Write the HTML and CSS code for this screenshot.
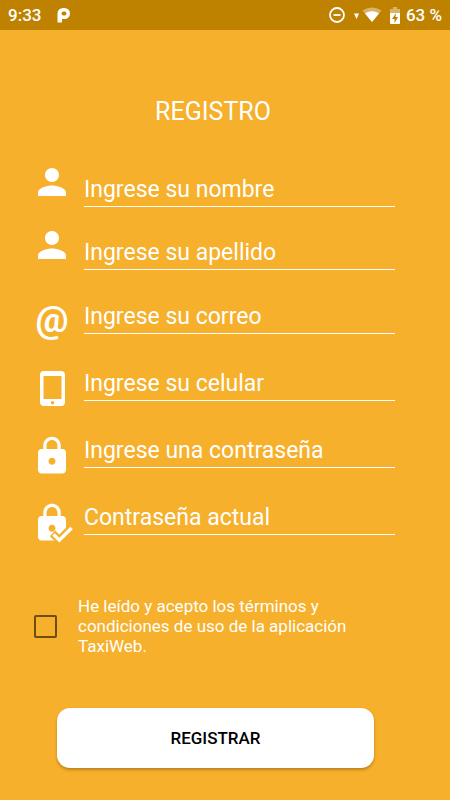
FILE: index.html
```html
<!DOCTYPE html>
<html lang="es">
<head>
<meta charset="utf-8">
<meta name="viewport" content="width=device-width, initial-scale=1">
<title>Registro</title>
<link rel="stylesheet" href="styles.css">
</head>
<body>
<header class="status">
  <span class="clock">9:33</span>
  <svg class="brand" width="14" height="16" viewBox="0 0 14 16" aria-hidden="true">
    <path fill="#fff" fill-rule="evenodd" d="M0.500 6.500A5.500 5.500 0 0 1 6 1H7.500a5.500 5.500 0 0 1 0 11H5v3.500H0.500zM6.500 4.500A2 2 0 0 0 6.500 8.500H7.500A2 2 0 0 0 7.500 4.500z"/>
  </svg>
  <svg class="dnd" width="16" height="16" viewBox="0 0 16 16" fill="none" stroke="#fff" stroke-width="1.800" aria-hidden="true">
    <circle cx="8" cy="8" r="7"/><path d="M4.500 8h7"/>
  </svg>
  <svg class="wifi" width="28" height="16" viewBox="0 0 28 16" aria-hidden="true">
    <path fill="#fff" d="M0 6.500h5L2.500 12z"/>
    <path fill="#fff" opacity=".4" d="M8.500 3.500Q18 -2.500 27.500 3.500L18 15z"/>
    <path fill="#fff" d="M11 6.500Q18 2 25 6.500L18 15z"/>
  </svg>
  <svg class="battery" width="10" height="17" viewBox="0 0 10 17" aria-hidden="true">
    <path fill="#fff" opacity=".4" d="M3 0h4v2h3v4H0V2h3z"/>
    <path fill="#fff" d="M0 6h10v10q0 1-1 1H1q-1 0-1-1z"/>
    <path fill="#be8200" d="M6 6L2 12h2.500v4L8 10H5.500z"/>
  </svg>
  <span>63 %</span>
</header>

<main class="page">
  <h1 class="title">REGISTRO</h1>
  <form class="form">
    <div class="names">
      <div class="field">
        <label for="nombre" aria-label="Nombre"><svg class="icon" viewBox="0 0 24 24"><path d="M12 12c2.210 0 4-1.790 4-4s-1.790-4-4-4-4 1.790-4 4 1.790 4 4 4zm0 2c-2.670 0-8 1.340-8 4v2h16v-2c0-2.660-5.330-4-8-4z"/></svg></label>
        <input id="nombre" class="entry" type="text" placeholder="Ingrese su nombre">
      </div>
      <div class="field">
        <label for="apellido" aria-label="Apellido"><svg class="icon" viewBox="0 0 24 24"><path d="M12 12c2.210 0 4-1.790 4-4s-1.790-4-4-4-4 1.790-4 4 1.790 4 4 4zm0 2c-2.670 0-8 1.340-8 4v2h16v-2c0-2.660-5.330-4-8-4z"/></svg></label>
        <input id="apellido" class="entry" type="text" placeholder="Ingrese su apellido">
      </div>
    </div>
    <div class="account">
      <div class="field">
        <label for="correo" class="at" aria-label="Correo">@</label>
        <input id="correo" class="entry" type="email" placeholder="Ingrese su correo">
      </div>
      <div class="field">
        <label for="celular" aria-label="Celular"><svg class="icon" viewBox="0 0 42 42"><path fill-rule="evenodd" d="M13 3h17q4 0 4 4v27q0 4-4 4H13q-4 0-4-4V7q0-4 4-4zM12.500 8v23h18V8zM21.500 33a1.700 1.700 0 0 0 0 3.400a1.700 1.700 0 0 0 0-3.400z"/></svg></label>
        <input id="celular" class="entry" type="tel" placeholder="Ingrese su celular">
      </div>
      <div class="field">
        <label for="clave" aria-label="Contraseña"><svg class="icon" viewBox="0 0 24 24"><path d="M18 8h-1V6c0-2.760-2.240-5-5-5S7 3.240 7 6v2H6c-1.100 0-2 .9-2 2v10c0 1.100.9 2 2 2h12c1.100 0 2-.9 2-2V10c0-1.100-.9-2-2-2zm-6 9c-1.100 0-2-.9-2-2s.9-2 2-2 2 .9 2 2-.9 2-2 2zm3.100-9H8.900V6c0-1.710 1.390-3.100 3.100-3.100s3.100 1.390 3.100 3.100v2z"/></svg></label>
        <input id="clave" class="entry" type="password" placeholder="Ingrese una contraseña">
      </div>
      <div class="field">
        <label for="actual" aria-label="Contraseña actual"><svg class="icon" viewBox="0 0 24 24"><path d="M18 8h-1V6c0-2.760-2.240-5-5-5S7 3.240 7 6v2H6c-1.100 0-2 .9-2 2v10c0 1.100.9 2 2 2h12c1.100 0 2-.9 2-2V10c0-1.100-.9-2-2-2zm-6 9c-1.100 0-2-.9-2-2s.9-2 2-2 2 .9 2 2-.9 2-2 2zm3.100-9H8.900V6c0-1.710 1.390-3.100 3.100-3.100s3.100 1.390 3.100 3.100v2z"/><path class="cut" d="M12.300 17.900L16.200 21.700L23.100 14.800"/><path class="tick" d="M12.900 18.500L16.200 21.800L23.200 14.800"/></svg></label>
        <input id="actual" class="entry" type="password" placeholder="Contraseña actual">
      </div>
    </div>
    <div class="terms">
      <input id="terminos" class="check" type="checkbox">
      <label for="terminos">He leído y acepto los términos y condiciones de uso de la aplicación TaxiWeb.</label>
    </div>
    <button class="submit" type="button">REGISTRAR</button>
  </form>
</main>
</body>
</html>
```
FILE: styles.css
```css
* {
  box-sizing: border-box;
}

body {
  margin: 0;
  min-height: 100vh;
  background: #f6b02b;
  color: #fff;
  font-family: Roboto, "Liberation Sans", sans-serif;
}

.status {
  display: flex;
  align-items: center;
  height: 30px;
  padding: 0 8px;
  background: #be8200;
  font-size: 17px;
  font-weight: 500;
}

.brand {
  margin-left: 16px;
}

.dnd {
  margin-left: auto;
}

.wifi {
  margin-left: 9px;
}

.battery {
  margin: 0 6px 0 8px;
}

.page {
  padding: 66px 55px 30px 31px;
}

.title {
  margin: 0 0 33px;
  font-size: 25px;
  font-weight: 400;
  line-height: 32px;
  text-align: center;
}

.names,
.account {
  display: grid;
  gap: 17px;
}

.account {
  gap: 25px;
  margin-top: 31px;
}

.field {
  display: grid;
  grid-template-columns: 42px 1fr;
  column-gap: 11px;
}

.names .entry {
  margin-top: 8px;
}

.account .entry {
  margin-top: -5px;
}

.icon,
.at {
  display: block;
  width: 42px;
  height: 42px;
  fill: #fff;
  overflow: visible;
}

.at {
  font-size: 37px;
  font-weight: 700;
  line-height: 38px;
  text-align: center;
}

.cut,
.tick {
  fill: none;
  stroke: #f6b02b;
  stroke-width: 4.500;
}

.tick {
  stroke: #fff;
  stroke-width: 2;
}

.entry {
  width: 100%;
  min-width: 0;
  height: 38px;
  padding: 4px 0 0;
  border: 0;
  border-bottom: 1px solid #fff;
  border-radius: 0;
  outline: 0;
  background: transparent;
  color: #fff;
  font: 400 23px Roboto, "Liberation Sans", sans-serif;
}

.entry::placeholder {
  color: #fff;
  opacity: 1;
}

.terms {
  display: flex;
  align-items: center;
  gap: 21px;
  margin: 52px 0 52px 3px;
  font-size: 17px;
  line-height: 20px;
}

.terms label {
  max-width: 290px;
}

.check {
  appearance: none;
  flex: none;
  width: 23px;
  height: 23px;
  margin: 0;
  border: 2px solid #6e4d10;
  border-radius: 2px;
}

.check:checked {
  background: #6e4d10;
}

.submit {
  display: block;
  width: calc(100% - 47px);
  height: 60px;
  margin: 0 21px 0 26px;
  border: 0;
  border-radius: 13px;
  background: #fff;
  color: #000;
  box-shadow: 0 2px 3px rgba(80, 50, 0, 0.35);
  font: 500 17px Roboto, "Liberation Sans", sans-serif;
}
```
